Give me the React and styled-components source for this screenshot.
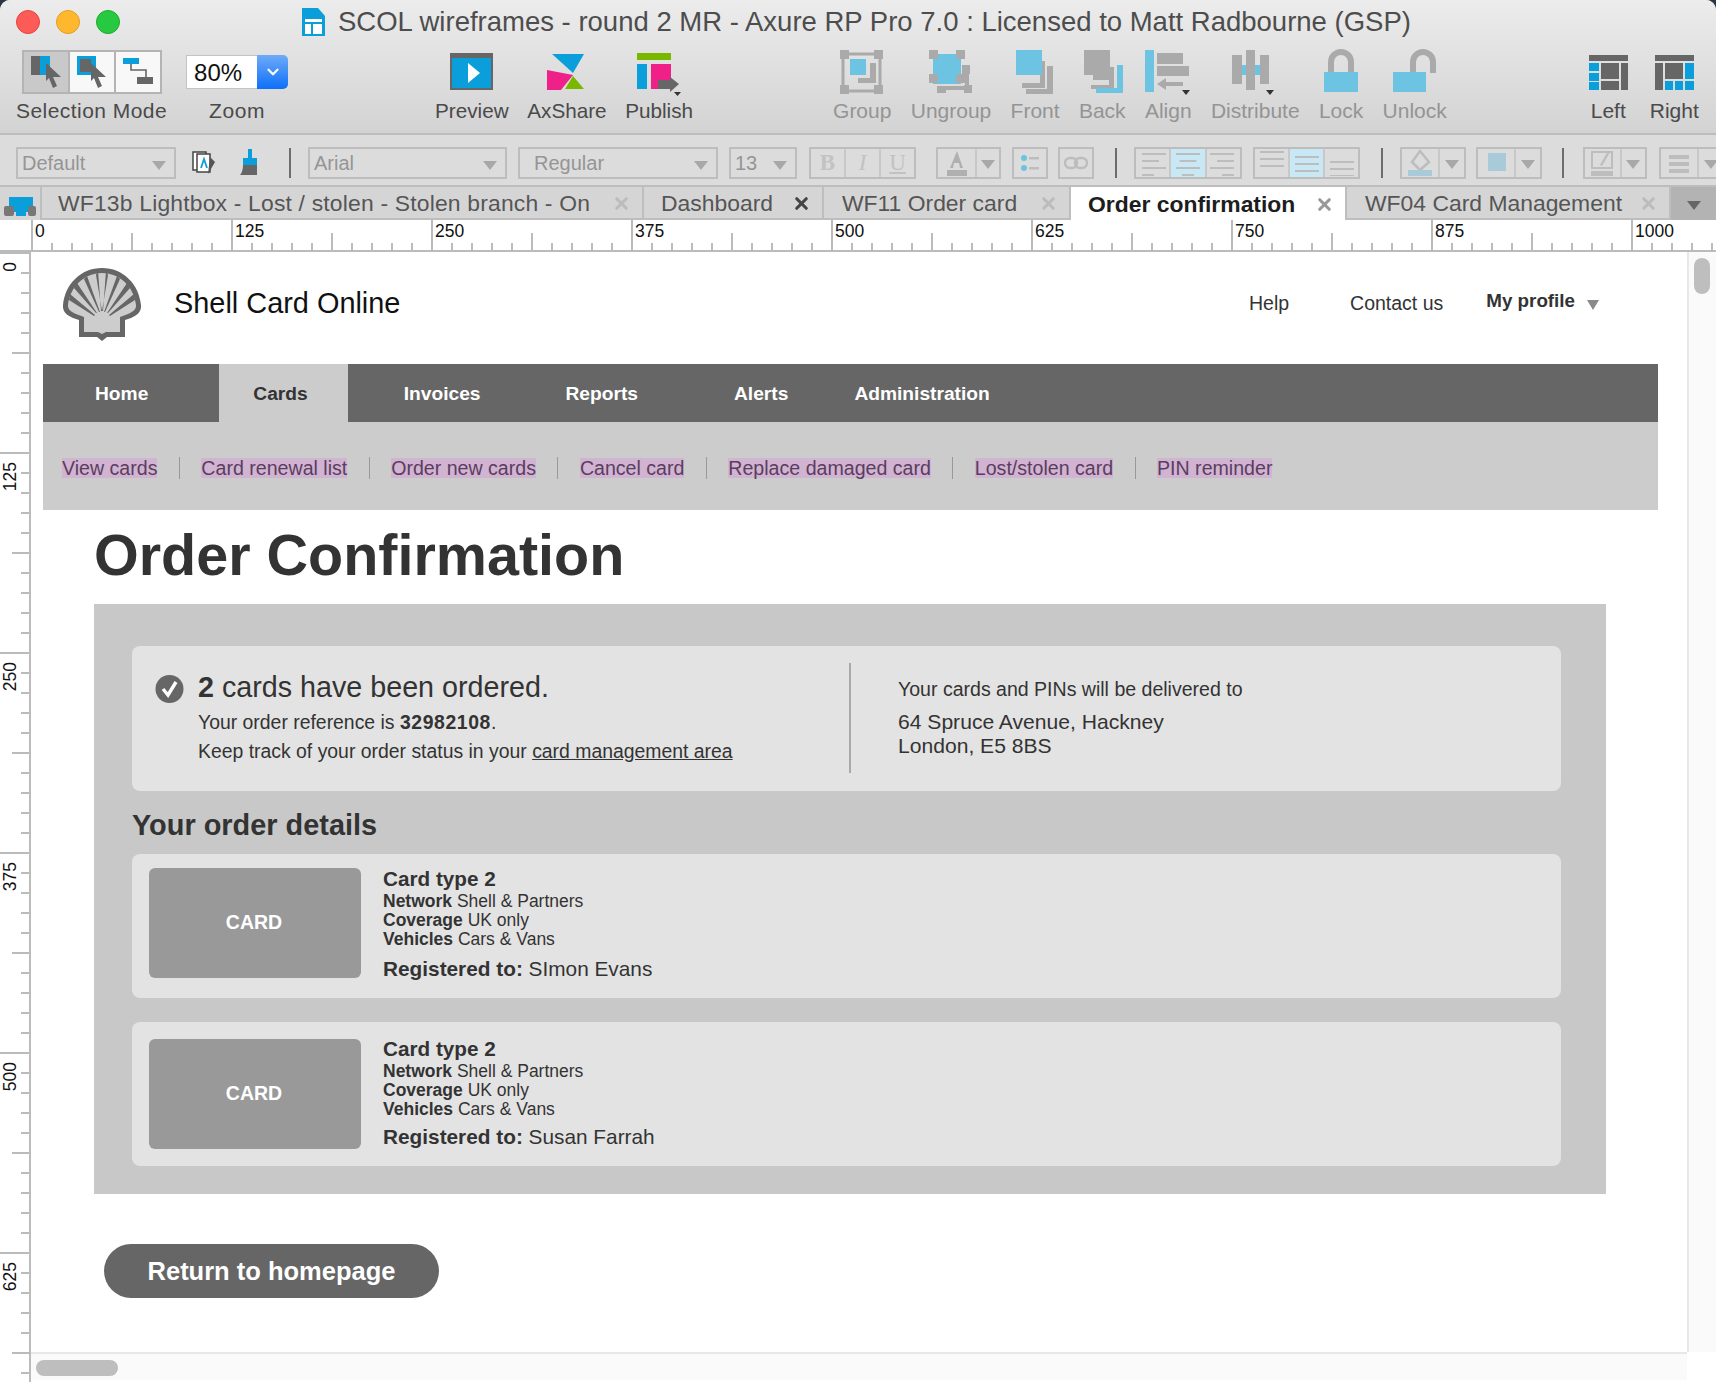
import React from 'react'
import styled, { createGlobalStyle } from 'styled-components'
import { X, ChevronDown } from 'lucide-react'

const Global = createGlobalStyle`
  html, body { margin: 0; padding: 0; background: linear-gradient(#2a3644 14px, #fff 14px); }
  body { font-family: "Liberation Sans", Arial, sans-serif; color: #333; }
  * { box-sizing: border-box; }
`

const Window = styled.div`
  width: 1716px;
  height: 1382px;
  display: flex;
  flex-direction: column;
  overflow: hidden;
  border-radius: 10px 10px 8px 8px;
  background: #fff;
`
const Chrome = styled.div`
  height: 135px;
  flex-shrink: 0;
  background: linear-gradient(#ececec, #d3d3d3);
  border-bottom: 2px solid #bdbdbd;
`
const TitleBar = styled.div`
  height: 42px;
  display: flex;
  align-items: center;
  padding: 2px 0 0 16px;
`
const Lights = styled.div`
  display: flex;
  gap: 16px;
`
const Light = styled.span`
  width: 24px;
  height: 24px;
  border-radius: 50%;
  background: ${p => p.$c};
  border: 1px solid ${p => p.$b};
`
const TitleText = styled.div`
  margin-left: 182px;
  display: flex;
  align-items: center;
  gap: 13px;
  font-size: 27.5px;
  color: #4d4d4d;
  white-space: nowrap;
`
const Toolbar = styled.div`
  display: flex;
  padding: 6px 0 0 16px;
`
const ToolGroup = styled.div`
  display: flex;
  gap: ${p => p.$gap}px;
  margin-left: ${p => p.$ml || 0}px;
`
const Tool = styled.div`
  display: flex;
  flex-direction: column;
  align-items: center;
`
const ToolIcon = styled.div`
  height: 48px;
  display: flex;
  justify-content: center;
`
const ToolLabel = styled.div`
  font-size: ${p => p.$fs || 21}px;
  line-height: 26px;
  margin-top: 2px;
  white-space: nowrap;
  letter-spacing: ${p => p.$ls || 0}px;
  color: ${p => (p.$off ? '#949494' : '#4a4a4a')};
`
const ModeBox = styled.div`
  display: flex;
  margin-top: 2px;
  height: 44px;
  width: 140px;
  border: 2px solid #b4b4b4;
`
const ModeCell = styled.div`
  flex: 1;
  display: flex;
  align-items: center;
  justify-content: center;
  background: ${p => (p.$on ? '#c9c9c9' : '#f8f8f8')};
  & + & { border-left: 2px solid #b4b4b4; }
`
const ZoomBox = styled.div`
  display: flex;
  width: 102px;
  height: 34px;
  margin-top: 7px;
`
const ZoomValue = styled.div`
  width: 71px;
  background: #fff;
  border: 1px solid #c4c4c4;
  border-right: 0;
  font-size: 24px;
  line-height: 34px;
  padding-left: 7px;
  color: #111;
`
const ZoomArrow = styled.div`
  flex: 1;
  display: flex;
  align-items: center;
  justify-content: center;
  color: #fff;
  border-radius: 0 5px 5px 0;
  background: linear-gradient(#6fabf8, #0d6ffa);
`
const FormatBar = styled.div`
  height: 52px;
  flex-shrink: 0;
  display: flex;
  align-items: center;
  padding: 5px 0 0 16px;
  background: #dcdcdc;
  border-bottom: 2px solid #bdbdbd;
`
const FormatSelect = styled.div`
  width: ${p => p.$w}px;
  flex-shrink: 0;
  height: 32px;
  margin-left: ${p => p.$ml || 0}px;
  border: 2px solid #bdbdbd;
  display: flex;
  align-items: center;
  justify-content: space-between;
  padding: 1px 8px 0 ${p => p.$pad || 4}px;
  font-size: 20px;
  color: #959595;
`
const Caret = styled.span`
  width: 0;
  height: 0;
  margin-top: 4px;
  border-left: 7px solid transparent;
  border-right: 7px solid transparent;
  border-top: 9px solid ${p => p.$c || '#a8a8a8'};
`
const Rule = styled.span`
  width: 2px;
  height: 30px;
  flex-shrink: 0;
  margin-left: ${p => p.$ml}px;
  background: #6d6d6d;
`
const Seg = styled.div`
  display: flex;
  flex-shrink: 0;
  width: ${p => p.$w}px;
  height: 32px;
  margin-left: ${p => p.$ml || 0}px;
  border: 2px solid #bdbdbd;
`
const SegCell = styled.div`
  flex: ${p => p.$flex || 1};
  display: flex;
  align-items: center;
  justify-content: center;
  background: ${p => (p.$on ? '#c9e8f5' : 'transparent')};
  font: ${p => p.$font || 'bold 23px "Liberation Serif", serif'};
  color: #c2c2c2;
  & + & { border-left: 2px solid #c8c8c8; }
`
const FreeIcon = styled.div`
  flex-shrink: 0;
  margin-left: ${p => p.$ml}px;
  display: flex;
`
const TabBar = styled.div`
  height: 33px;
  flex-shrink: 0;
  display: flex;
  background: #d5d5d5;
`
const TabIcon = styled.div`
  width: 42px;
  padding: 9px 0 0 4px;
  border-right: 2px solid #bebebe;
`
const Tab = styled.div`
  width: ${p => p.$w}px;
  display: flex;
  align-items: center;
  justify-content: space-between;
  padding: 2px 11px 0 ${p => p.$pad}px;
  font-size: 22.9px;
  letter-spacing: ${p => p.$ls || 0}px;
  font-weight: ${p => (p.$on ? 700 : 400)};
  white-space: nowrap;
  color: ${p => (p.$on ? '#1d1d1d' : '#555')};
  background: ${p => (p.$on ? '#fff' : 'transparent')};
  border-right: 2px solid #bebebe;
  border-bottom: ${p => (p.$on ? 0 : '2px solid #bebebe')};
`
const TabClose = styled.span`
  display: flex;
  color: ${p => p.$c || '#bcbcbc'};
`
const TabMenu = styled.div`
  flex: 1;
  display: flex;
  align-items: center;
  justify-content: center;
  background: #b3b3b3;
`
const HRuler = styled.div`
  height: 32px;
  flex-shrink: 0;
  display: flex;
  padding-left: 31px;
  overflow: hidden;
  background: #fff;
  border-bottom: 2px solid #bbb;
`
const HMark = styled.div`
  width: 200px;
  flex-shrink: 0;
  padding-left: 2px;
  border-left: 2px solid #bbb;
  font-size: 17.5px;
  line-height: 22px;
  color: #111;
  background:
    linear-gradient(90deg, #bbb 2px, transparent 2px) 98px bottom / 100px 17px no-repeat,
    linear-gradient(90deg, #bbb 2px, transparent 2px) -2px bottom / 20px 7px repeat-x;
`
const Workspace = styled.div`
  flex: 1;
  display: flex;
  min-height: 0;
`
const VRuler = styled.div`
  width: 31px;
  flex-shrink: 0;
  overflow: hidden;
  border-right: 2px solid #bbb;
`
const VMark = styled.div`
  height: 200px;
  border-top: 2px solid #bbb;
  background:
    linear-gradient(#bbb 2px, transparent 2px) right 98px / 17px 100px no-repeat,
    linear-gradient(#bbb 2px, transparent 2px) right -2px / 8px 20px repeat-y;
`
const VLabel = styled.div`
  writing-mode: vertical-rl;
  transform: rotate(180deg);
  font-size: 17.5px;
  line-height: 20px;
  margin-top: 8px;
  color: #111;
`
const Canvas = styled.div`
  flex: 1;
  display: flex;
  flex-direction: column;
  min-width: 0;
`
const Page = styled.div`
  flex: 1;
  padding: 0 29px 0 12px;
`
const Header = styled.div`
  height: 102px;
  margin-bottom: 10px;
  display: flex;
  align-items: center;
  padding: 0 59px 0 19px;
`
const LogoMark = styled.div`
  display: flex;
  margin-top: 4px;
`
const Brand = styled.div`
  font-size: 28.9px;
  color: #111;
  margin-left: 32px;
`
const HeaderLinks = styled.div`
  margin-left: auto;
  display: flex;
  align-items: center;
  font-size: 19.5px;
  color: #333;
`
const HeaderLink = styled.span`
  margin-right: ${p => p.$mr}px;
`
const Profile = styled.span`
  font-size: 18.8px;
  font-weight: 700;
  margin: -4px 12px 0 0;
`
const ProfileCaret = styled.span`
  width: 0;
  height: 0;
  margin-top: 3px;
  border-left: 6px solid transparent;
  border-right: 6px solid transparent;
  border-top: 10px solid #8a8a8a;
`
const Nav = styled.div`
  height: 58px;
  display: flex;
  background: #666;
`
const NavItem = styled.div`
  display: flex;
  align-items: center;
  padding: 2px ${p => p.$r}px 0 ${p => p.$l}px;
  font-size: 19.2px;
  font-weight: 700;
  color: ${p => (p.$on ? '#333' : '#fff')};
  background: ${p => (p.$on ? '#ccc' : 'transparent')};
`
const SubNav = styled.div`
  height: 88px;
  display: flex;
  align-items: center;
  padding: 4px 0 0 19px;
  background: #ccc;
`
const SubLink = styled.span`
  font-size: 19.6px;
  line-height: 20px;
  color: #5b3d60;
  background: #d0b4d1;
`
const SubSep = styled.span`
  width: 1px;
  height: 22px;
  margin: 0 21.45px;
  background: #999;
`
const Heading = styled.h1`
  margin: 0 0 0 51px;
  height: 94px;
  font-size: 57.5px;
  line-height: 90px;
  color: #333;
`
const Panel = styled.div`
  width: 1512px;
  margin-left: 51px;
  padding: 42px 45px 28px 38px;
  background: #c8c8c8;
`
const SuccessCard = styled.div`
  height: 145px;
  display: flex;
  padding: 17px 0 18px 23px;
  background: #e3e3e3;
  border-radius: 8px;
`
const SuccessMain = styled.div`
  width: 694px;
  display: flex;
  gap: 14px;
`
const CheckMark = styled.div`
  margin-top: 11px;
  height: 30px;
`
const SuccessText = styled.div`
  padding-top: 6px;
`
const SuccessHead = styled.div`
  font-size: 28.7px;
  line-height: 36px;
  margin-bottom: 3px;
  color: #333;
`
const SuccessLine = styled.div`
  font-size: 19.4px;
  line-height: 29px;
  color: #333;
  a { color: inherit; }
  b { letter-spacing: 0.6px; }
`
const VDivider = styled.div`
  width: 2px;
  background: #aaa;
`
const Delivery = styled.div`
  padding: 13px 0 0 47px;
`
const DeliveryLead = styled.div`
  font-size: 19.55px;
  line-height: 26px;
`
const Address = styled.div`
  margin-top: 8px;
  font-size: 21.1px;
  line-height: 24px;
`
const DetailsHead = styled.h2`
  margin: 17px 0 12px;
  font-size: 28.9px;
  line-height: 34px;
  color: #333;
`
const OrderCard = styled.div`
  height: 144px;
  display: flex;
  gap: 22px;
  padding: ${p => p.$top}px 16px 0 17px;
  background: #e3e3e3;
  border-radius: 8px;
  & + & { margin-top: 24px; }
`
const Thumb = styled.div`
  width: 212px;
  height: 110px;
  margin-top: ${p => p.$off || 0}px;
  display: flex;
  align-items: center;
  justify-content: center;
  padding: 0 2px 2px 0;
  border-radius: 6px;
  background: #999;
  color: #fff;
  font-size: 19.5px;
  font-weight: 700;
`
const CardInfo = styled.div`
  color: #333;
`
const CardType = styled.div`
  font-size: 20.7px;
  line-height: 22px;
  margin-bottom: 2px;
  font-weight: 700;
`
const Spec = styled.div`
  font-size: 17.5px;
  line-height: 19px;
  b { font-weight: 700; }
`
const Registered = styled.div`
  margin-top: ${p => p.$gap}px;
  font-size: 20.8px;
  line-height: 22px;
`
const ReturnButton = styled.button`
  display: block;
  width: 335px;
  height: 54px;
  margin: 50px 0 0 61px;
  border: 0;
  border-radius: 27px;
  background: #666;
  color: #fff;
  font: 700 25.5px "Liberation Sans", Arial, sans-serif;
`
const HScroll = styled.div`
  height: 28px;
  flex-shrink: 0;
  margin-bottom: 2px;
  padding: 6px 0 0 5px;
  background: #fafafa;
  border-top: 2px solid #e8e8e8;
`
const HThumb = styled.div`
  width: 82px;
  height: 16px;
  border-radius: 8px;
  background: #bebebe;
`
const VScroll = styled.div`
  width: 29px;
  flex-shrink: 0;
  margin-bottom: 30px;
  padding: 6px 0 0 5px;
  background: #fafafa;
  border-left: 2px solid #e8e8e8;
`
const VThumb = styled.div`
  width: 16px;
  height: 36px;
  border-radius: 8px;
  background: #bebebe;
`

const BLUE = '#0a9edb'
const SOFT = '#6cc4e2'
const DARK = '#666'
const GREY = '#aaa'

// every toolbar icon is 48 tall, its y measured from the top of the icon row
const Icon = ({ w, children }) => (
  <svg width={w} height="48" viewBox={`0 0 ${w} 48`}>{children}</svg>
)
const Drop = ({ x, y }) => <polygon points={`${x},${y} ${x + 8},${y} ${x + 4},${y + 5}`} fill="#333" />

const PreviewIcon = () => (
  <Icon w={43}>
    <rect x="0" y="5" width="43" height="37" fill={DARK} />
    <rect x="2" y="10" width="39" height="30" fill={BLUE} />
    <polygon points="18,15 30,25 18,35" fill="#fff" />
  </Icon>
)
const AxShareIcon = () => (
  <Icon w={40}>
    <polygon points="5,6 37,6 26,25" fill={BLUE} />
    <polygon points="0,22 26,27 14,42 0,42" fill="#ef2088" />
    <polygon points="26,28 37,41 18,41" fill="#7ab800" />
  </Icon>
)
const PublishIcon = () => (
  <Icon w={44}>
    <rect x="0" y="5" width="34" height="7" fill="#7ab800" />
    <rect x="0" y="16" width="10" height="25" fill={BLUE} />
    <rect x="14" y="16" width="20" height="25" fill="#ef2088" />
    <rect x="21" y="32" width="13" height="9" fill={DARK} />
    <polygon points="33,29 42,36 33,44" fill={DARK} />
    <polygon points="37,44 44,44 40.5,48" fill="#333" />
  </Icon>
)
const GroupIcon = () => (
  <Icon w={44}>
    <rect x="3" y="6" width="37" height="37" fill="none" stroke={GREY} strokeWidth="3" />
    <g fill={GREY}>
      <rect x="0" y="2" width="9" height="9" /><rect x="34" y="2" width="9" height="9" />
      <rect x="0" y="37" width="9" height="9" /><rect x="34" y="37" width="9" height="9" />
      <path d="M18 30h12v-15h6v20h-18z" />
    </g>
    <rect x="10" y="11" width="16" height="16" fill={SOFT} />
  </Icon>
)
const UngroupIcon = () => (
  <Icon w={44}>
    <rect x="4" y="6" width="28" height="30" fill={SOFT} />
    <g fill={GREY}>
      <rect x="0" y="2" width="9" height="9" /><rect x="27" y="2" width="9" height="9" />
      <rect x="0" y="26" width="9" height="9" /><rect x="27" y="26" width="9" height="9" />
      <rect x="10" y="38" width="25" height="4" /><rect x="33" y="17" width="8" height="9" />
      <rect x="8" y="38" width="9" height="7" /><rect x="35" y="37" width="8" height="8" />
      <rect x="36" y="20" width="4" height="20" />
    </g>
  </Icon>
)
const FrontIcon = () => (
  <Icon w={42}>
    <path d="M26 13h5v27h-23v-5h18z" fill={GREY} />
    <path d="M33 19h6v28h-27v-5h21z" fill={GREY} transform="translate(0 -1)" />
    <rect x="2" y="2" width="26" height="25" fill={SOFT} />
  </Icon>
)
const BackIcon = () => (
  <Icon w={42}>
    <path d="M28 19h5v22h-23v-4h18z" fill={GREY} />
    <path d="M36 17h6v28h-27v-5h21z" fill={SOFT} />
    <rect x="3" y="2" width="26" height="25" fill={GREY} />
    <rect x="12" y="20" width="18" height="12" fill={GREY} />
  </Icon>
)
const AlignIcon = () => (
  <Icon w={46}>
    <rect x="0" y="2" width="9" height="42" fill={SOFT} />
    <rect x="12" y="5" width="26" height="11" fill={GREY} />
    <rect x="12" y="18" width="32" height="10" fill={GREY} />
    <path d="M12 36l9-6v4h17v4h-17v4z" fill={GREY} />
    <Drop x={37} y={42} />
  </Icon>
)
const DistributeIcon = () => (
  <Icon w={46}>
    <rect x="8" y="17" width="28" height="10" fill={SOFT} />
    <rect x="0" y="7" width="10" height="29" fill={GREY} />
    <rect x="14" y="2" width="9" height="40" fill={GREY} />
    <rect x="28" y="7" width="9" height="29" fill={GREY} />
    <Drop x={34} y={42} />
  </Icon>
)
const LockIcon = () => (
  <Icon w={34}>
    <path d="M7 26V14a10 10 0 0 1 20 0v12" fill="none" stroke={GREY} strokeWidth="6" />
    <rect x="0" y="24" width="34" height="20" fill={SOFT} />
  </Icon>
)
const UnlockIcon = () => (
  <Icon w={44}>
    <path d="M20 26V14a10 10 0 0 1 20 0v11" fill="none" stroke={GREY} strokeWidth="6" />
    <rect x="0" y="24" width="33" height="20" fill={SOFT} />
  </Icon>
)
const LeftIcon = () => (
  <Icon w={39}>
    <rect x="0" y="7" width="39" height="6" fill={DARK} />
    <rect x="0" y="15" width="10" height="8" fill={BLUE} />
    <rect x="0" y="25" width="10" height="8" fill={BLUE} />
    <rect x="0" y="34" width="10" height="8" fill={BLUE} />
    <rect x="12" y="15" width="18" height="16" fill={DARK} />
    <rect x="12" y="33" width="18" height="9" fill={DARK} />
    <rect x="32" y="15" width="7" height="27" fill={DARK} />
  </Icon>
)
const RightIcon = () => (
  <Icon w={39}>
    <rect x="0" y="7" width="39" height="6" fill={DARK} />
    <rect x="0" y="15" width="8" height="27" fill={DARK} />
    <rect x="10" y="15" width="18" height="16" fill={DARK} />
    <rect x="10" y="33" width="8" height="9" fill={BLUE} />
    <rect x="20" y="33" width="8" height="9" fill={BLUE} />
    <rect x="30" y="33" width="9" height="9" fill={BLUE} />
    <rect x="30" y="15" width="9" height="16" fill={BLUE} />
  </Icon>
)

const Cursor = ({ x, y }) => (
  <path transform={`translate(${x} ${y})`} d="M0 0l15 14h-8l4 9-4 2-4-10-3 3z" fill={DARK} />
)

const TitleIcon = () => (
  <svg width="23" height="28" viewBox="0 0 23 28">
    <path d="M0 0h16l7 8v20h-23z" fill={BLUE} />
    <rect x="3" y="11" width="17" height="3" fill="#fff" />
    <rect x="3" y="16" width="6" height="10" fill="#fff" />
    <rect x="11" y="16" width="9" height="10" fill="#fff" />
  </svg>
)

// dark ribs widen towards the rim of the shell
const ribs = [
  '40,44 34,8 36,4 39,44', '40,44 46,8 44,4 41,44',
  '37,45 22,12 25,9 38,45', '43,45 58,12 55,9 42,45',
  '34,46 12,21 15,16 35,46', '46,46 68,21 65,16 45,46',
  '32,49 7,33 8,27 33,48', '48,49 73,33 72,27 47,48',
]
const ShellLogo = () => (
  <svg width="80" height="76" viewBox="0 0 80 76">
    <path d="M40 1C61 1 77 17 79 38c.5 6-3 10-10 13l-6 2v17H45l-5 4-5-4H17V53l-6-2C4 48 .5 44 1 38 3 17 19 1 40 1z" fill={DARK} />
    <path d="M40 6C58 6 72 20 74 38c.3 4-2 6-8 9l-8 3v15H44l-4 2-4-2H22V50l-8-3c-6-3-8.300-5-8-9C8 20 22 6 40 6z" fill="#cdcdcd" />
    {ribs.map(points => <polygon key={points} points={points} fill={DARK} />)}
  </svg>
)

const Check = () => (
  <svg width="29" height="30" viewBox="0 0 29 30">
    <circle cx="14.5" cy="15" r="14" fill={DARK} />
    <path d="M8 15l5 6 8-13" fill="none" stroke="#fff" strokeWidth="3.400" />
  </svg>
)

const Lines = ({ align, y = 3, gap = 7, n = 4 }) => {
  const widths = [24, 17, 24, 12]
  return (
    <svg width="30" height="26" viewBox="0 0 30 26">
      {widths.slice(0, n).map((w, i) => (
        <rect key={i} x={align === 'l' ? 4 : align === 'r' ? 26 - w : 15 - w / 2} y={y + i * gap} width={w} height="2" fill="#bdbdbd" />
      ))}
    </svg>
  )
}
const VLines = ({ top }) => (
  <svg width="30" height="26" viewBox="0 0 30 26">
    {[0, 1, 2].map(i => (
      <rect key={i} x="3" y={top + i * 7} width="24" height="2" fill="#bdbdbd" />
    ))}
  </svg>
)

const hMarks = [0, 125, 250, 375, 500, 625, 750, 875, 1000]
const vMarks = [0, 125, 250, 375, 500, 625]
const subLinks = ['View cards', 'Card renewal list', 'Order new cards', 'Cancel card', 'Replace damaged card', 'Lost/stolen card', 'PIN reminder']
const tools = [
  ['Group', GroupIcon], ['Ungroup', UngroupIcon], ['Front', FrontIcon], ['Back', BackIcon],
  ['Align', AlignIcon], ['Distribute', DistributeIcon], ['Lock', LockIcon], ['Unlock', UnlockIcon],
]
const tabs = [
  { label: 'WF13b Lightbox - Lost / stolen - Stolen branch - On', w: 602, pad: 16, ls: 0.18 },
  { label: 'Dashboard', w: 180, pad: 17, close: '#444' },
  { label: 'WF11 Order card', w: 247, pad: 18 },
  { label: 'Order confirmation', w: 276, pad: 17, on: true, close: '#999' },
  { label: 'WF04 Card Management', w: 324, pad: 18 },
]
const orders = [
  { name: 'SImon Evans', top: 14, off: 0, gap: 8.5 },
  { name: 'Susan Farrah', top: 16, off: 1, gap: 6.5 },
]

const App = () => (
  <Window>
    <Global />
    <Chrome>
      <TitleBar>
        <Lights>
          <Light $c="#fc5b57" $b="#e5453f" />
          <Light $c="#ffb82e" $b="#e09e1f" />
          <Light $c="#26c940" $b="#1ea931" />
        </Lights>
        <TitleText>
          <TitleIcon />
          SCOL wireframes - round 2 MR - Axure RP Pro 7.0 : Licensed to Matt Radbourne (GSP)
        </TitleText>
      </TitleBar>
      <Toolbar>
        <ToolGroup $gap={19}>
          <Tool>
            <ToolIcon>
              <ModeBox>
                <ModeCell $on>
                  <svg width="40" height="40" viewBox="0 0 40 40">
                    <rect x="5" y="4" width="9" height="19" fill={DARK} /><rect x="14" y="4" width="10" height="19" fill={BLUE} />
                    <Cursor x={20} y={11} />
                  </svg>
                </ModeCell>
                <ModeCell>
                  <svg width="40" height="40" viewBox="0 0 40 40">
                    <rect x="5" y="4" width="19" height="19" fill={BLUE} /><rect x="8" y="7" width="11" height="13" fill={DARK} />
                    <Cursor x={19} y={11} />
                  </svg>
                </ModeCell>
                <ModeCell>
                  <svg width="40" height="40" viewBox="0 0 40 40">
                    <rect x="5" y="6" width="16" height="6" fill={BLUE} />
                    <path d="M13 12v6h15v7" fill="none" stroke={DARK} strokeWidth="1.6" />
                    <rect x="19" y="25" width="16" height="7" fill={DARK} />
                  </svg>
                </ModeCell>
              </ModeBox>
            </ToolIcon>
            <ToolLabel $ls={0.45}>Selection Mode</ToolLabel>
          </Tool>
          <Tool>
            <ToolIcon>
              <ZoomBox>
                <ZoomValue>80%</ZoomValue>
                <ZoomArrow><ChevronDown size={18} strokeWidth={3} /></ZoomArrow>
              </ZoomBox>
            </ToolIcon>
            <ToolLabel $ls={0.6}>Zoom</ToolLabel>
          </Tool>
        </ToolGroup>
        <ToolGroup $ml={147} $gap={18.6}>
          <Tool><ToolIcon><PreviewIcon /></ToolIcon><ToolLabel $fs={20.7}>Preview</ToolLabel></Tool>
          <Tool><ToolIcon><AxShareIcon /></ToolIcon><ToolLabel $fs={20.7}>AxShare</ToolLabel></Tool>
          <Tool><ToolIcon><PublishIcon /></ToolIcon><ToolLabel $fs={20.7}>Publish</ToolLabel></Tool>
        </ToolGroup>
        <ToolGroup $ml={140} $gap={19.3}>
          {tools.map(([label, Glyph]) => (
            <Tool key={label}><ToolIcon><Glyph /></ToolIcon><ToolLabel $off>{label}</ToolLabel></Tool>
          ))}
        </ToolGroup>
        <ToolGroup $ml={142} $gap={22}>
          <Tool><ToolIcon><LeftIcon /></ToolIcon><ToolLabel>Left</ToolLabel></Tool>
          <Tool><ToolIcon><RightIcon /></ToolIcon><ToolLabel>Right</ToolLabel></Tool>
        </ToolGroup>
      </Toolbar>
    </Chrome>
    <FormatBar>
      <FormatSelect $w={160}>Default<Caret /></FormatSelect>
      <FreeIcon $ml={16}>
        <svg width="26" height="28" viewBox="0 0 26 28">
          <rect x="1" y="3" width="13" height="18" fill="#fff" stroke="#444" strokeWidth="1.5" />
          <rect x="5" y="5" width="13" height="18" fill="#fff" stroke="#444" strokeWidth="1.5" />
          <path d="M9 19l3-9 3 9" fill="none" stroke={BLUE} strokeWidth="1.8" />
          <path d="M18 8l5 5-7 12z" fill="#555" />
        </svg>
      </FreeIcon>
      <FreeIcon $ml={22}>
        <svg width="20" height="30" viewBox="0 0 20 30">
          <rect x="8" y="1" width="4" height="9" fill={BLUE} />
          <rect x="3" y="10" width="14" height="7" fill={BLUE} />
          <path d="M3 17h14v10h-17c2-2 3-6 3-10z" fill={DARK} />
        </svg>
      </FreeIcon>
      <Rule $ml={29} />
      <FormatSelect $w={199} $ml={17}>Arial<Caret /></FormatSelect>
      <FormatSelect $w={200} $ml={11} $pad={14}>Regular<Caret /></FormatSelect>
      <FormatSelect $w={68} $ml={11}>13<Caret /></FormatSelect>
      <Seg $w={107} $ml={12}>
        <SegCell>B</SegCell>
        <SegCell $font="italic 23px 'Liberation Serif', serif">I</SegCell>
        <SegCell $font="23px 'Liberation Serif', serif"><u>U</u></SegCell>
      </Seg>
      <Seg $w={65} $ml={20}>
        <SegCell $flex={1.7}>
          <svg width="28" height="28" viewBox="0 0 28 28">
            <path d="M14 2l6 17h-3l-1-5h-5l-1 5h-3z" fill="#b0b0b0" />
            <rect x="4" y="21" width="20" height="6" fill="#b0b0b0" />
          </svg>
        </SegCell>
        <SegCell><Caret /></SegCell>
      </Seg>
      <Seg $w={36} $ml={11}>
        <SegCell>
          <svg width="24" height="24" viewBox="0 0 24 24">
            <circle cx="6" cy="7" r="3" fill={SOFT} /><circle cx="6" cy="17" r="3" fill={SOFT} />
            <rect x="11" y="6" width="10" height="2.5" fill="#bdbdbd" /><rect x="11" y="16" width="10" height="2.5" fill="#bdbdbd" />
          </svg>
        </SegCell>
      </Seg>
      <Seg $w={36} $ml={10}>
        <SegCell>
          <svg width="24" height="24" viewBox="0 0 24 24">
            <g fill="none" stroke="#bdbdbd" strokeWidth="2.4">
              <rect x="1" y="7" width="12" height="10" rx="5" /><rect x="11" y="7" width="12" height="10" rx="5" />
            </g>
          </svg>
        </SegCell>
      </Seg>
      <Rule $ml={21} />
      <Seg $w={108} $ml={17}>
        <SegCell><Lines align="l" /></SegCell>
        <SegCell $on><Lines align="c" /></SegCell>
        <SegCell><Lines align="r" /></SegCell>
      </Seg>
      <Seg $w={107} $ml={11}>
        <SegCell><VLines top={1} /></SegCell>
        <SegCell $on><VLines top={6} /></SegCell>
        <SegCell><VLines top={11} /></SegCell>
      </Seg>
      <Rule $ml={21} />
      <Seg $w={66} $ml={17}>
        <SegCell $flex={1.5}>
          <svg width="30" height="28" viewBox="0 0 30 28">
            <path d="M15 2l9 11-9 8-8-8z" fill="none" stroke="#bdbdbd" strokeWidth="2.5" />
            <rect x="3" y="21" width="24" height="6" fill="#a9cbd9" />
          </svg>
        </SegCell>
        <SegCell><Caret /></SegCell>
      </Seg>
      <Seg $w={66} $ml={10}>
        <SegCell $flex={1.5}>
          <svg width="26" height="26" viewBox="0 0 26 26">
            <rect x="7" y="7" width="19" height="19" fill="#ddd" />
            <rect x="5" y="3" width="18" height="18" fill="#a9cbd9" />
          </svg>
        </SegCell>
        <SegCell><Caret /></SegCell>
      </Seg>
      <Rule $ml={20} />
      <Seg $w={64} $ml={19}>
        <SegCell $flex={1.5}>
          <svg width="26" height="28" viewBox="0 0 26 28">
            <rect x="3" y="3" width="20" height="16" fill="none" stroke="#bdbdbd" strokeWidth="2" />
            <path d="M11 16l8-14 2 1-8 14z" fill="#bdbdbd" />
            <rect x="2" y="22" width="22" height="5" fill="#bdbdbd" />
          </svg>
        </SegCell>
        <SegCell><Caret /></SegCell>
      </Seg>
      <Seg $w={66} $ml={12}>
        <SegCell $flex={1.5}>
          <svg width="26" height="26" viewBox="0 0 26 26">
            <rect x="3" y="5" width="20" height="4" fill="#bdbdbd" />
            <rect x="3" y="12" width="20" height="4" fill="#bdbdbd" />
            <rect x="3" y="19" width="20" height="4" fill="#bdbdbd" />
          </svg>
        </SegCell>
        <SegCell><Caret /></SegCell>
      </Seg>
    </FormatBar>
    <TabBar>
      <TabIcon>
        <svg width="32" height="22" viewBox="0 0 32 22">
          <rect x="5" y="1" width="24" height="15" fill={BLUE} />
          <rect x="12" y="16" width="10" height="4" fill={BLUE} />
          <rect x="0" y="10" width="10" height="10" rx="2" fill="#777" />
          <rect x="24" y="10" width="8" height="10" rx="2" fill="#777" />
        </svg>
      </TabIcon>
      {tabs.map(tab => (
        <Tab key={tab.label} $w={tab.w} $on={tab.on} $ls={tab.ls} $pad={tab.pad}>
          {tab.label}
          <TabClose $c={tab.close}><X size={19} strokeWidth={4} /></TabClose>
        </Tab>
      ))}
      <TabMenu><Caret $c="#666" /></TabMenu>
    </TabBar>
    <HRuler>
      {hMarks.map(m => <HMark key={m}>{m}</HMark>)}
    </HRuler>
    <Workspace>
      <VRuler>
        {vMarks.map(m => <VMark key={m}><VLabel>{m}</VLabel></VMark>)}
      </VRuler>
      <Canvas>
        <Page>
          <Header>
            <LogoMark><ShellLogo /></LogoMark>
            <Brand>Shell Card Online</Brand>
            <HeaderLinks>
              <HeaderLink $mr={61}>Help</HeaderLink>
              <HeaderLink $mr={43}>Contact us</HeaderLink>
              <Profile>My profile</Profile>
              <ProfileCaret />
            </HeaderLinks>
          </Header>
          <Nav>
            <NavItem $l={52} $r={71}>Home</NavItem>
            <NavItem $on $l={34} $r={40}>Cards</NavItem>
            <NavItem $l={56} $r={43}>Invoices</NavItem>
            <NavItem $l={42} $r={48}>Reports</NavItem>
            <NavItem $l={48} $r={33}>Alerts</NavItem>
            <NavItem $l={33} $r={0}>Administration</NavItem>
          </Nav>
          <SubNav>
            {subLinks.map((link, i) => (
              <React.Fragment key={link}>
                {i > 0 && <SubSep />}
                <SubLink>{link}</SubLink>
              </React.Fragment>
            ))}
          </SubNav>
          <Heading>Order Confirmation</Heading>
          <Panel>
            <SuccessCard>
              <SuccessMain>
                <CheckMark><Check /></CheckMark>
                <SuccessText>
                  <SuccessHead><b>2</b> cards have been ordered.</SuccessHead>
                  <SuccessLine>Your order reference is <b>32982108</b>.</SuccessLine>
                  <SuccessLine>Keep track of your order status in your <a href="#cards">card management area</a></SuccessLine>
                </SuccessText>
              </SuccessMain>
              <VDivider />
              <Delivery>
                <DeliveryLead>Your cards and PINs will be delivered to</DeliveryLead>
                <Address>64 Spruce Avenue, Hackney<br />London, E5 8BS</Address>
              </Delivery>
            </SuccessCard>
            <DetailsHead>Your order details</DetailsHead>
            {orders.map(order => (
              <OrderCard key={order.name} $top={order.top}>
                <Thumb $off={order.off}>CARD</Thumb>
                <CardInfo>
                  <CardType>Card type 2</CardType>
                  <Spec><b>Network</b> Shell &amp; Partners</Spec>
                  <Spec><b>Coverage</b> UK only</Spec>
                  <Spec><b>Vehicles</b> Cars &amp; Vans</Spec>
                  <Registered $gap={order.gap}><b>Registered to:</b> {order.name}</Registered>
                </CardInfo>
              </OrderCard>
            ))}
          </Panel>
          <ReturnButton>Return to homepage</ReturnButton>
        </Page>
        <HScroll><HThumb /></HScroll>
      </Canvas>
      <VScroll><VThumb /></VScroll>
    </Workspace>
  </Window>
)

export default App
